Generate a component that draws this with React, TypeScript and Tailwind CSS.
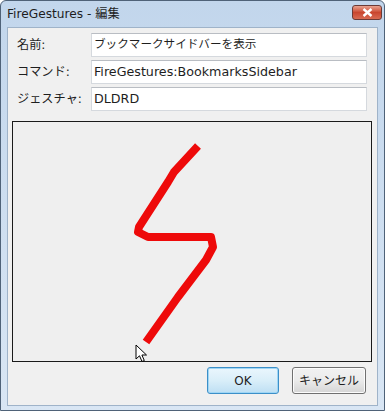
import React from "react";

const font = { fontFamily: '"DejaVu Sans", "Noto Sans CJK JP", sans-serif' };

const fields = [
  { label: "名前:", value: "ブックマークサイドバーを表示", size: "text-[11.6px]" },
  { label: "コマンド:", value: "FireGestures:BookmarksSidebar", size: "text-[12.7px]" },
  { label: "ジェスチャ:", value: "DLDRD", size: "text-[12.7px]" },
];

const gesture =
  "185,24 161,50 155,60 126,105 125,110 135,115 198,115 200,125 193,138 165,175 133,220";

const App: React.FC = () => {
  return (
    <div
      className="w-[385px] h-[411px] flex flex-col rounded-t-[6px] border border-[#4f6278] bg-gradient-to-b from-[#c2d6ec] to-[#d9e6f4] text-[#1e1e1e]"
      style={font}
    >
      {/* Title bar */}
      <div className="h-[26px] flex items-center justify-between pl-[6px] pr-[2px] shrink-0">
        <span className="text-[12.2px] leading-none">FireGestures - 編集</span>
        <div className="w-[30px] h-[15px] rounded-[3px] border border-[#6b3a36] bg-gradient-to-b from-[#e8a290] via-[#c9462f] to-[#d86a52] flex items-center justify-center mt-[-4px]">
          <svg width="11" height="9" viewBox="0 0 11 9">
            <path d="M1.5 1 L9.5 8 M9.5 1 L1.5 8" stroke="#ffffff" strokeWidth="2.4" />
          </svg>
        </div>
      </div>

      {/* Client area */}
      <div className="flex-1 mx-[6px] mb-[4px] bg-[#f0f0f0] border border-[#9fb3c9] flex flex-col">
        <div className="flex flex-col gap-[3px] pt-[5px] pl-[9px] pr-[10px]">
          {fields.map((f) => (
            <div key={f.label} className="flex items-center h-[24px]">
              <span className="w-[74px] text-[12.2px]">{f.label}</span>
              <div className={`flex-1 h-[24px] bg-white border border-[#d5d9de] border-t-[#b9bdc3] flex items-center pl-[2px] ${f.size}`}>
                {f.value}
              </div>
            </div>
          ))}
        </div>

        {/* Gesture canvas */}
        <div className="relative mt-[10px] ml-[4px] mr-[5px] h-[241px] border border-[#1a1a1a] bg-[#efefef]">
          <svg className="absolute inset-0" width="360" height="240">
            <polyline
              points={gesture}
              fill="none"
              stroke="#ee0a0a"
              strokeWidth="8"
              strokeLinejoin="round"
              strokeLinecap="butt"
            />
          </svg>
          <svg className="absolute left-[122px] top-[222px]" width="14" height="20" viewBox="0 0 14 20">
            <path
              d="M1 1 L1 15 L4.5 11.8 L7 17.5 L9.3 16.5 L6.9 11 L11.5 11 Z"
              fill="#ffffff"
              stroke="#000000"
              strokeWidth="1"
              strokeLinejoin="round"
            />
          </svg>
        </div>

        {/* Buttons */}
        <div className="flex justify-end gap-[13px] mt-[5px] pr-[11px]">
          <button className="w-[72px] h-[27px] rounded-[3px] border border-[#3c8fc8] bg-gradient-to-b from-[#eaf6fd] via-[#d9eef9] to-[#bedff3] shadow-[inset_0_0_0_1px_#9fd6f5] text-[12px] text-[#1e1e1e]">
            OK
          </button>
          <button className="w-[74px] h-[27px] rounded-[3px] border border-[#707070] bg-gradient-to-b from-[#f2f2f2] via-[#ebebeb] to-[#d5d5d5] shadow-[inset_0_0_0_1px_#fcfcfc] text-[12px] text-[#1e1e1e]">
            キャンセル
          </button>
        </div>
      </div>
    </div>
  );
};

export default App;
